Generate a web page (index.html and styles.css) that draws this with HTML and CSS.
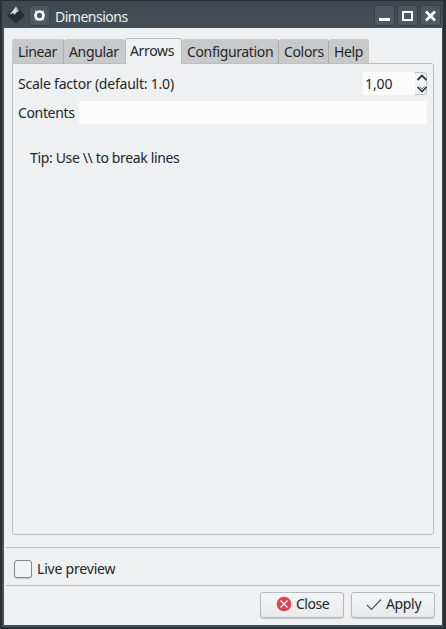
FILE: index.html
```html
<!DOCTYPE html>
<html lang="en">
<head>
<meta charset="utf-8">
<title>Dimensions</title>
<link rel="stylesheet" href="styles.css">
</head>
<body>
<div class="window">
  <header class="titlebar">
    <svg class="logo" width="20" height="20" viewBox="0 0 20 20"><path d="M10 1 1 10.500l3 3 6 5 6-5 3-3z" fill="#292a2b"/><path d="M10 1.500 3.500 9.500l4-1.500.5 2L11 7l2-1z" fill="#d8d8d8"/><path d="M10 1.500 11 7l2-1.500z" fill="#a0a1a2"/></svg>
    <span class="tool pin"><svg width="20" height="20" viewBox="0 0 20 20"><circle cx="10.500" cy="10.500" r="4" fill="none" stroke="#fff" stroke-width="2.600"/><path d="M6 6.500h2M13 6.500h2M6 14.500h2M13 14.500h2" stroke="#ddd" stroke-width="1.500"/></svg></span>
    <h1 class="title">Dimensions</h1>
    <div class="controls">
      <span class="tool"><svg width="20" height="20" viewBox="0 0 20 20"><path d="M5 14.500h11" stroke="#fff" stroke-width="3"/></svg></span>
      <span class="tool"><svg width="20" height="20" viewBox="0 0 20 20"><path d="M6 7h9v8H6z" fill="none" stroke="#fff" stroke-width="2"/></svg></span>
      <span class="tool"><svg width="20" height="20" viewBox="0 0 20 20"><path d="M6 6.500l9 9M15 6.500l-9 9" stroke="#fff" stroke-width="2.800"/></svg></span>
    </div>
  </header>
  <main class="content">
    <nav class="tabs">
      <span class="tab linear">Linear</span><span class="tab angular">Angular</span><span class="tab arrows active">Arrows</span><span class="tab configuration">Configuration</span><span class="tab colors">Colors</span><span class="tab help">Help</span>
    </nav>
    <section class="pane">
      <div class="row">
        <span class="scale-label">Scale factor (default: 1.0)</span>
        <div class="spin"><span class="value">1,00</span><svg width="12" height="23" viewBox="0 0 12 23"><path d="M0 .5h8.500q3 0 3 3v16q0 3-3 3H0" fill="#f1f2f3" stroke="#b9bbbd"/><path d="M2.500 8 7 3.500 11.500 8" fill="none" stroke="#30363b" stroke-width="1.800"/><path d="M2.500 15 7 19.500 11.500 15" fill="none" stroke="#30363b" stroke-width="1.600"/><path d="M4.500 14.500 7 17l2.500-2.500" fill="none" stroke="#777c80"/></svg></div>
      </div>
      <div class="row contents"><span>Contents</span><span class="field"></span></div>
      <p class="tip">Tip: Use \\ to break lines</p>
    </section>
    <div class="preview"><span class="checkbox"></span><span class="preview-label">Live preview</span></div>
    <footer class="actions">
      <span class="button close"><svg width="16" height="16" viewBox="0 0 16 16"><circle cx="8" cy="8" r="7.300" fill="#da4453"/><path d="M4.500 4.500l7 7M11.500 4.500l-7 7" stroke="#fff" stroke-width="1.200"/></svg><span>Close</span></span>
      <span class="button apply"><svg width="16" height="16" viewBox="0 0 16 16"><path d="M1 9l4.500 4.500L15 3.500" fill="none" stroke="#4d5256" stroke-width="1.100"/></svg><span>Apply</span></span>
    </footer>
  </main>
</div>
</body>
</html>
```
FILE: styles.css
```css
* { box-sizing: border-box; }
body {
  margin: 0;
  font: 14px/20px "Noto Sans", sans-serif;
  letter-spacing: -0.35px;
  color: #232629;
}
.window {
  width: 446px;
  height: 629px;
  padding: 0 3px 2px 2px;
  background: #2b3034;
}
.titlebar {
  height: 28px;
  display: flex;
  align-items: center;
  padding: 1px 2px 0 4px;
  border-top: 1px solid #292e32;
  background: linear-gradient(#3f484f, #475057);
}
.logo { flex: none; margin-top: 0; }
.tool {
  width: 21px;
  height: 21px;
  display: flex;
  border: 1px solid #394147;
  border-radius: 3px;
  background: linear-gradient(#4c565d, #505b62);
}
.tool svg { flex: none; margin: -1px; }
.pin { margin-left: 3px; }
.title {
  margin: 4px 0 0 5px;
  font-size: 14px;
  font-weight: 400;
  letter-spacing: -0.5px;
  line-height: 20px;
  color: #eff0f1;
}
.controls { display: flex; gap: 2px; margin-left: auto; }
.content {
  height: 599px;
  padding: 10px 0 0;
  background: #eff0f1;
  border: solid #475057;
  border-width: 0 1px 2px 2px;
}
.tabs {
  display: flex;
  align-items: flex-end;
  height: 26px;
  margin: 0 0 -1px 8px;
  position: relative;
}
.tab {
  height: 25px;
  padding: 3px 0 0 5px;
  background: #c8c9ca;
  border-right: 1px solid #a9abad;
  border-bottom: 1px solid #bcbec0;
  border-radius: 3px 3px 0 0;
  white-space: nowrap;
}
.linear { width: 52px; padding-left: 6px; }
.angular { width: 61px; border-right: 0; }
.arrows { width: 57px; }
.configuration { width: 97px; }
.colors { width: 50px; }
.help { width: 40px; border-right: 0; }
.active {
  height: 26px;
  background: #eff0f1;
  border: 1px solid #b9bbbd;
  border-bottom: 0;
  padding-top: 2px;
  padding-left: 4px;
}
.pane {
  width: 422px;
  height: 472px;
  margin-left: 8px;
  padding: 8px 6px 0 5px;
  border: 1px solid #bcbec0;
  border-radius: 0 3px 3px 3px;
}
.row { display: flex; align-items: center; height: 23px; }
.scale-label { letter-spacing: -0.22px; }
.spin {
  display: flex;
  width: 64px;
  height: 23px;
  margin-left: auto;
  background: #fcfcfc;
}
.value { padding: 2px 0 0 2px; letter-spacing: -0.1px; }
.spin svg { margin-left: auto; background: #eff0f1; }
.contents { margin-top: 6px; }
.contents span:first-child { width: 61px; }
.field { flex: 1; height: 23px; background: #fcfcfc; }
.tip { margin: 24px 0 0 12px; }
.preview {
  display: flex;
  align-items: center;
  gap: 5px;
  height: 39px;
  margin: 12px 2px 0;
  padding: 4px 0 0 8px;
  border: solid #bcbec0;
  border-width: 1px 0;
}
.preview-label { letter-spacing: -0.2px; }
.checkbox {
  width: 18px;
  height: 18px;
  border: 1px solid #85888b;
  border-radius: 3px;
  background: #f1f2f3;
  box-shadow: 0 1px 1px #c5c7c9;
}
.actions { display: flex; justify-content: flex-end; gap: 7px; padding: 6px 7px 0 0; }
.button {
  width: 84px;
  height: 26px;
  display: flex;
  align-items: center;
  gap: 4px;
  padding: 0 0 2px 15px;
  border: 1px solid #b7babc;
  border-radius: 3px;
  background: linear-gradient(#f3f4f5, #e9eaeb);
  box-shadow: 0 1px 1px #c5c7c9;
}
.close { letter-spacing: -0.5px; }
.apply { padding-left: 14px; }
```
